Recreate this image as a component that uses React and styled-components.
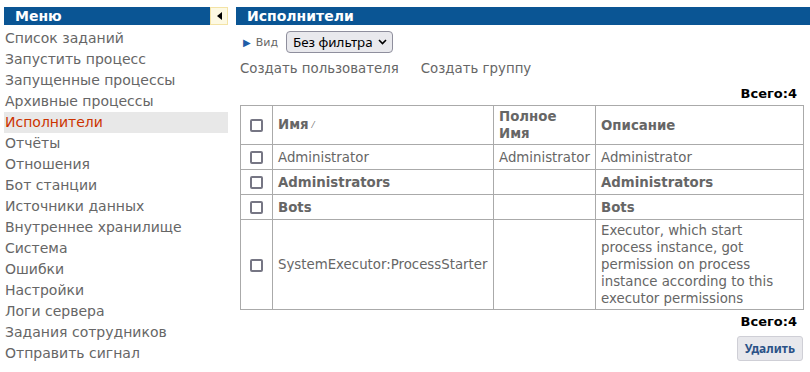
import React from "react";
import styled, { createGlobalStyle } from "styled-components";

const Global = createGlobalStyle`
  html, body { margin: 0; padding: 0; background: #fff; }
  body { font-family: "DejaVu Sans", "Liberation Sans", sans-serif; }
`;

const Page = styled.div`
  display: flex;
  align-items: flex-start;
  gap: 8px;
  padding: 7px 0 0 4px;
`;

const Sidebar = styled.aside`
  width: 224px;
  flex: none;
  display: flex;
  flex-direction: column;
`;

const BarRow = styled.div`
  display: flex;
  height: 18px;
`;

const Bar = styled.div`
  flex: 1;
  background: #0a5594;
  color: #fff;
  font-weight: bold;
  font-size: 14px;
  line-height: 18px;
  padding-left: 11px;
  white-space: nowrap;
`;

const Collapse = styled.button`
  width: 18px;
  height: 18px;
  padding: 0;
  margin: 0;
  border: 1px solid #f3e3a6;
  background: #fdf9e3;
  display: flex;
  align-items: center;
  justify-content: center;
  box-sizing: border-box;
`;

const Menu = styled.ul`
  list-style: none;
  margin: 3px 0 0;
  padding: 0;
`;

const MenuItem = styled.li`
  font-size: 14px;
  line-height: 21px;
  height: 21px;
  padding-left: 1px;
  color: ${(p) => (p.$active ? "#cc3300" : "#666")};
  background: ${(p) => (p.$active ? "#e8e8e8" : "transparent")};
  white-space: nowrap;
`;

const Main = styled.main`
  flex: 1;
  display: flex;
  flex-direction: column;
  min-width: 0;
`;

const Content = styled.div`
  padding: 6px 7px 0 4px;
  display: flex;
  flex-direction: column;
`;

const ViewRow = styled.div`
  display: flex;
  align-items: center;
  height: 22px;
  padding-left: 3px;
`;

const ViewLabel = styled.span`
  font-size: 11px;
  color: #666;
  display: flex;
  align-items: center;
  gap: 5px;
  margin-right: 8px;
`;

const Arrow = styled.span`
  color: #1f5ea8;
  font-size: 10px;
`;

const Select = styled.div`
  height: 22px;
  box-sizing: border-box;
  border: 1px solid #8f8f9d;
  border-radius: 4px;
  background: #e9e9ed;
  font-family: "Noto Sans", "DejaVu Sans", sans-serif;
  font-size: 13.33px;
  color: #000;
  display: flex;
  align-items: center;
  padding: 0 5px 0 6px;
  gap: 5px;
`;

const Links = styled.div`
  display: flex;
  gap: 22px;
  margin-top: 5px;
  height: 21px;
  align-items: center;
`;

const Link = styled.span`
  font-size: 13.33px;
  color: #666;
`;

const Total = styled.div`
  text-align: right;
  font-size: 13px;
  font-weight: bold;
  color: #000;
  padding-right: 6px;
  line-height: 16px;
  margin-top: ${(p) => p.$mt}px;
`;

const Table = styled.table`
  border-collapse: collapse;
  table-layout: fixed;
  width: 563px;
  margin-top: 3px;
  font-size: 13.33px;
  color: #666;
`;

const Th = styled.th`
  border: 1px solid #aaa;
  text-align: ${(p) => (p.$center ? "center" : "left")};
  font-weight: bold;
  padding: 2px 5px;
  line-height: 17px;
  height: 34px;
  vertical-align: ${(p) => (p.$top ? "top" : "middle")};
`;

const Td = styled.td`
  border: 1px solid #aaa;
  padding: 2px 5px;
  height: 20px;
  line-height: 17px;
  font-weight: ${(p) => (p.$bold ? "bold" : "normal")};
  text-align: ${(p) => (p.$center ? "center" : "left")};
  vertical-align: middle;
`;

const Desc = styled.div`
  max-width: 182px;
`;

const Box = styled.span`
  display: inline-block;
  width: 13px;
  height: 13px;
  box-sizing: border-box;
  border: 2px solid #767684;
  border-radius: 2px;
  vertical-align: middle;
`;

const Sort = styled.span`
  font-size: 8px;
  font-weight: normal;
  margin-left: 4px;
  vertical-align: middle;
`;

const Footer = styled.div`
  display: flex;
  justify-content: flex-end;
  margin-top: 6px;
`;

const Button = styled.button`
  height: 25px;
  padding: 0 7px;
  font-family: "Noto Sans", "DejaVu Sans", sans-serif;
  font-size: 12px;
  font-weight: bold;
  color: #2b5287;
  background: #e8e8ec;
  border: 1px solid #cfcfd6;
  border-radius: 3px;
`;

const menu = [
  "Список заданий",
  "Запустить процесс",
  "Запущенные процессы",
  "Архивные процессы",
  "Исполнители",
  "Отчёты",
  "Отношения",
  "Бот станции",
  "Источники данных",
  "Внутреннее хранилище",
  "Система",
  "Ошибки",
  "Настройки",
  "Логи сервера",
  "Задания сотрудников",
  "Отправить сигнал",
];

const rows = [
  { name: "Administrator", full: "Administrator", desc: "Administrator" },
  { name: "Administrators", full: "", desc: "Administrators", bold: true },
  { name: "Bots", full: "", desc: "Bots", bold: true },
  {
    name: "SystemExecutor:ProcessStarter",
    full: "",
    desc: "Executor, which start process instance, got permission on process instance according to this executor permissions",
  },
];

export default function App() {
  return (
    <>
      <Global />
      <Page>
        <Sidebar>
          <BarRow>
            <Bar>Меню</Bar>
            <Collapse aria-label="collapse">
              <svg width="5" height="8" viewBox="0 0 5 8">
                <path d="M5 0 L0 4 L5 8 Z" fill="#000" />
              </svg>
            </Collapse>
          </BarRow>
          <Menu>
            {menu.map((m) => (
              <MenuItem key={m} $active={m === "Исполнители"}>
                {m}
              </MenuItem>
            ))}
          </Menu>
        </Sidebar>
        <Main>
          <BarRow>
            <Bar>Исполнители</Bar>
          </BarRow>
          <Content>
            <ViewRow>
              <ViewLabel>
                <Arrow>▶</Arrow>Вид
              </ViewLabel>
              <Select>
                Без фильтра
                <svg width="9" height="6" viewBox="0 0 9 6">
                  <path d="M1 1 L4.5 4.5 L8 1" stroke="#000" strokeWidth="1.6" fill="none" />
                </svg>
              </Select>
            </ViewRow>
            <Links>
              <Link>Создать пользователя</Link>
              <Link>Создать группу</Link>
            </Links>
            <Total $mt={7}>Всего:4</Total>
            <Table>
              <colgroup>
                <col style={{ width: 32 }} />
                <col style={{ width: 221 }} />
                <col style={{ width: 102 }} />
                <col style={{ width: 208 }} />
              </colgroup>
              <thead>
                <tr>
                  <Th $center>
                    <Box />
                  </Th>
                  <Th>
                    Имя<Sort>⁄</Sort>
                  </Th>
                  <Th $top>Полное Имя</Th>
                  <Th>Описание</Th>
                </tr>
              </thead>
              <tbody>
                {rows.map((r) => (
                  <tr key={r.name}>
                    <Td $center>
                      <Box />
                    </Td>
                    <Td $bold={r.bold}>{r.name}</Td>
                    <Td>{r.full}</Td>
                    <Td $bold={r.bold}>
                      <Desc>{r.desc}</Desc>
                    </Td>
                  </tr>
                ))}
              </tbody>
            </Table>
            <Total $mt={4}>Всего:4</Total>
            <Footer>
              <Button>Удалить</Button>
            </Footer>
          </Content>
        </Main>
      </Page>
    </>
  );
}
